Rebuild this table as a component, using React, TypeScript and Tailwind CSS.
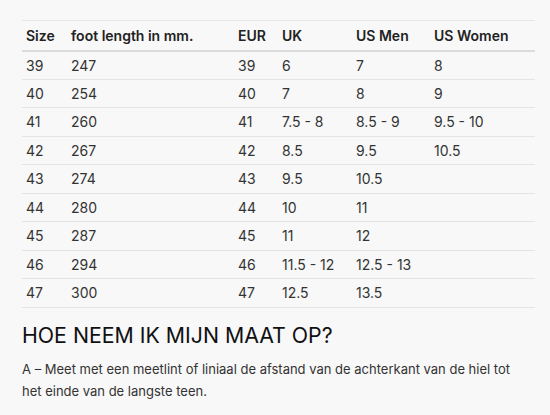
import React from 'react';

const rows = [
  ['39', '247', '39', '6', '7', '8'],
  ['40', '254', '40', '7', '8', '9'],
  ['41', '260', '41', '7.5 - 8', '8.5 - 9', '9.5 - 10'],
  ['42', '267', '42', '8.5', '9.5', '10.5'],
  ['43', '274', '43', '9.5', '10.5', ''],
  ['44', '280', '44', '10', '11', ''],
  ['45', '287', '45', '11', '12', ''],
  ['46', '294', '46', '11.5 - 12', '12.5 - 13', ''],
  ['47', '300', '47', '12.5', '13.5', ''],
];

const headers = ['Size', 'foot length in mm.', 'EUR', 'UK', 'US Men', 'US Women'];
const widths = ['w-[45px]', 'w-[167px]', 'w-[44px]', 'w-[74px]', 'w-[78px]', 'w-[105px]'];

export default function App() {
  return (
    <div className="min-h-screen bg-[#f8f8f8] px-[22px] pt-5 font-['Inter',sans-serif] text-[#333]">
      <table className="w-[513px] table-fixed border-collapse border-t border-[#e6e6e6] text-[14px]">
        <thead>
          <tr className="h-[30px] border-b-2 border-[#dcdcdc]">
            {headers.map((h, i) => (
              <th key={h} className={`${widths[i]} px-1 text-left font-semibold text-[#222]`}>
                {h}
              </th>
            ))}
          </tr>
        </thead>
        <tbody>
          {rows.map((r) => (
            <tr key={r[0]} className="h-[28.5px] border-b border-[#e4e4e4]">
              {r.map((c, i) => (
                <td key={i} className="px-1 text-left">
                  {c}
                </td>
              ))}
            </tr>
          ))}
        </tbody>
      </table>
      <h2 className="mt-[13px] text-[21.3px] leading-7 text-[#111]">HOE NEEM IK MIJN MAAT OP?</h2>
      <p className="mt-[9px] text-[13px] leading-[22px] text-[#333]">
        A – Meet met een meetlint of liniaal de afstand van de achterkant van de hiel tot het einde van de langste teen.
      </p>
    </div>
  );
}
